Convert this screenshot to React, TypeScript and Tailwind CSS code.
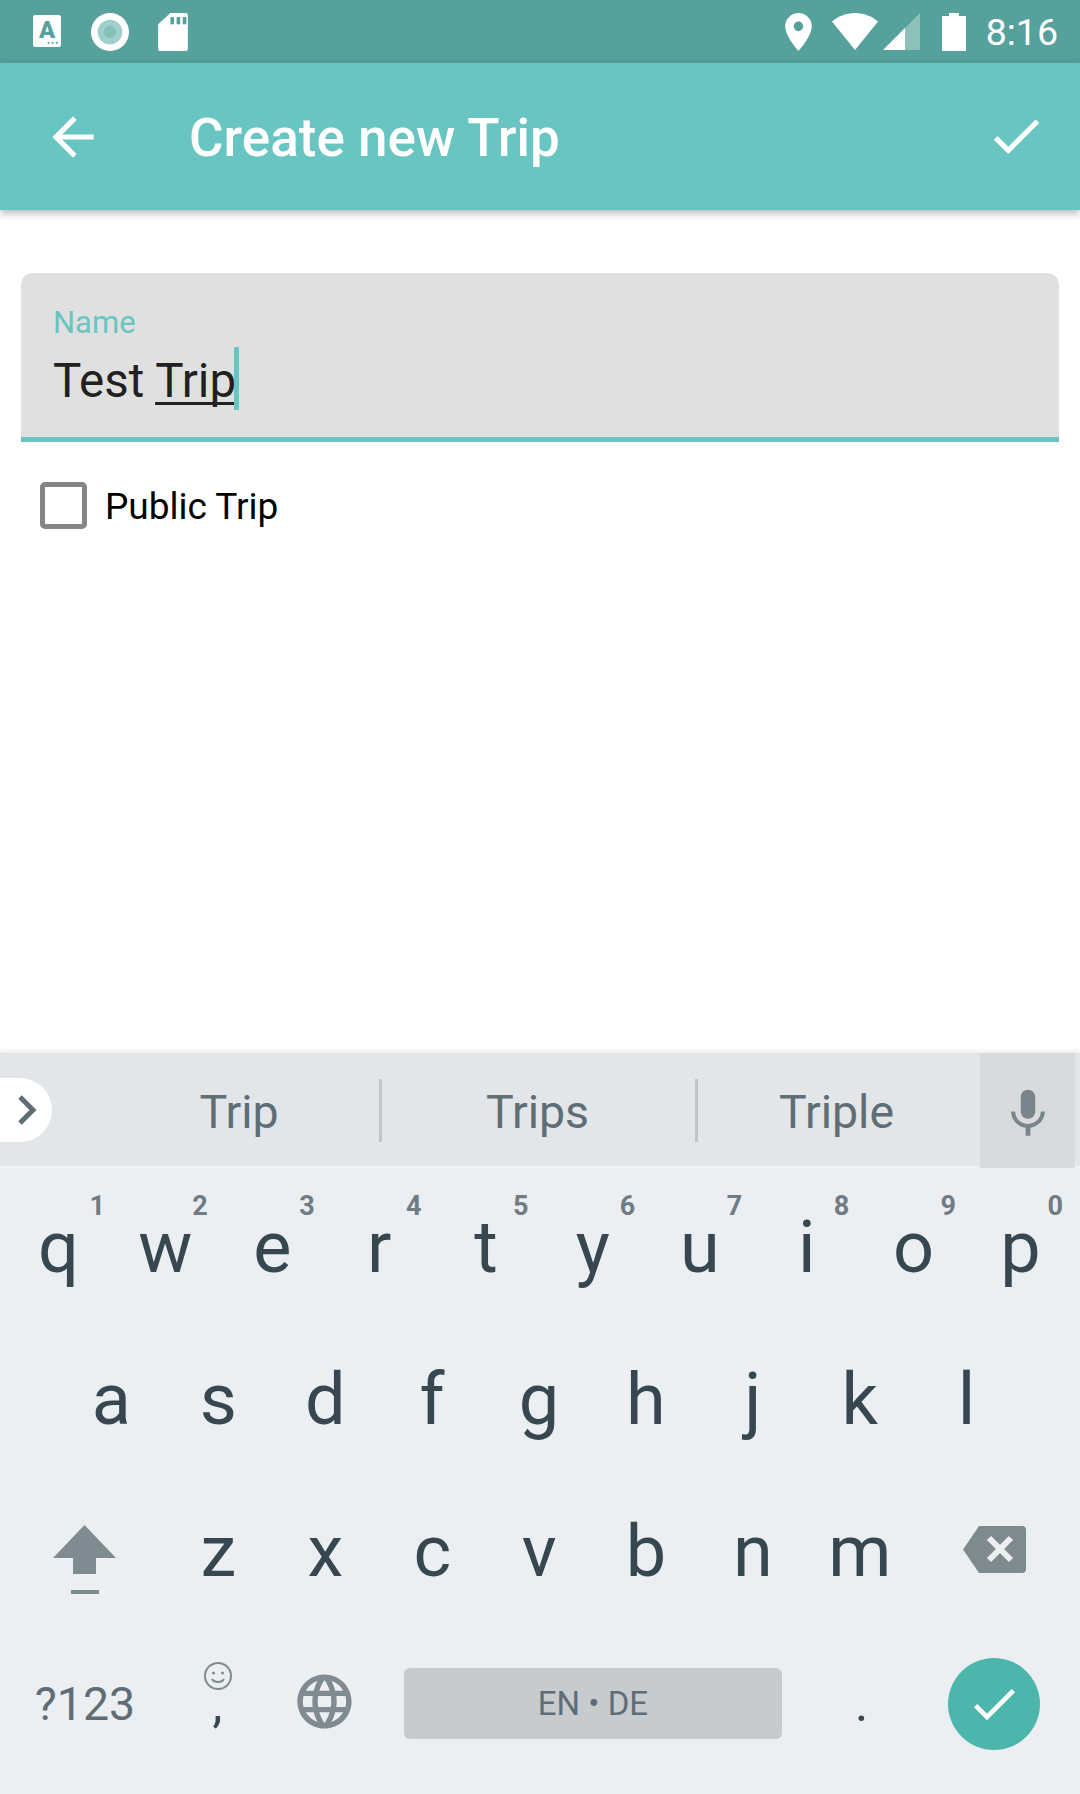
import { MdLanguage, MdMic } from 'react-icons/md';

const row1 = [
  ['q', '1'], ['w', '2'], ['e', '3'], ['r', '4'], ['t', '5'],
  ['y', '6'], ['u', '7'], ['i', '8'], ['o', '9'], ['p', '0'],
];
const row2 = ['a', 's', 'd', 'f', 'g', 'h', 'j', 'k', 'l'];
const row3 = ['z', 'x', 'c', 'v', 'b', 'n', 'm'];

function Key({ label, hint }: { label: string; hint?: string }) {
  return (
    <div className="relative w-[106.9px] h-full flex items-center justify-center text-[72px] leading-none text-[#37474f]">
      {label}
      {hint && (
        <span className={`absolute top-[18px] ${hint === '1' ? 'right-[7px]' : 'right-[11px]'} text-[27px] leading-[32px] font-bold text-[#6f7c84]`}>{hint}</span>
      )}
    </div>
  );
}

function StatusBar() {
  return (
    <div className="h-[63px] shrink-0 bg-[#57a19d] flex items-center justify-between pl-[33px] pr-[22px]">
      <div className="flex items-center">
        <svg width="28" height="32" viewBox="0 0 27 31" className="mt-[-1px]">
          <rect width="27" height="31" rx="2" fill="#fff" />
          <text x="13.5" y="22" textAnchor="middle" fontFamily="Roboto" fontWeight="900" fontSize="23" fill="#57a19d">A</text>
          <circle cx="15" cy="27" r="1" fill="#57a19d" />
          <circle cx="19" cy="27" r="1" fill="#57a19d" />
          <circle cx="23" cy="27" r="1" fill="#57a19d" />
        </svg>
        <svg width="38" height="38" viewBox="0 0 37 37" className="ml-[30px]">
          <circle cx="18.5" cy="18.5" r="18.5" fill="#fff" />
          <circle cx="18.5" cy="18.5" r="12" fill="#a0cfcb" />
          <circle cx="18.5" cy="18.5" r="6" fill="#84c0ba" />
        </svg>
        <svg width="30" height="38" viewBox="0 0 29 37" className="ml-[29px]">
          <path d="M12 0h15a2 2 0 0 1 2 2v33a2 2 0 0 1-2 2H2a2 2 0 0 1-2-2V11z" fill="#fff" />
          <rect x="12" y="4" width="3.5" height="7" fill="#57a19d" />
          <rect x="18" y="4" width="3.5" height="7" fill="#57a19d" />
          <rect x="24" y="4" width="3.5" height="7" fill="#57a19d" />
        </svg>
      </div>
      <div className="flex items-center">
        <svg width="27" height="38" viewBox="5 2 14 20" fill="#fff">
          <path d="M12 2C8.13 2 5 5.13 5 9c0 5.25 7 13 7 13s7-7.75 7-13c0-3.87-3.13-7-7-7zm0 9.500c-1.380 0-2.500-1.120-2.500-2.500s1.120-2.500 2.500-2.500 2.500 1.120 2.500 2.500-1.120 2.500-2.500 2.500z" />
        </svg>
        <svg width="46" height="37" viewBox="0 0 46 37" className="ml-[20px]">
          <path d="M0 8.500C6 3.500 14 0 23 0s17 3.500 23 8.500L23 37z" fill="#fff" />
        </svg>
        <svg width="37" height="37" viewBox="0 0 37 37" className="ml-[5px]">
          <path d="M22 15 37 0v37H22z" fill="#8cc0bb" />
          <path d="M0 37 22 15v22z" fill="#fff" />
        </svg>
        <svg width="24" height="38" viewBox="0 0 24 38" className="ml-[22px]">
          <path d="M7 0h10v3h7v35H0V3h7z" fill="#fff" />
        </svg>
        <span className="ml-[20px] mt-[2px] text-[37.5px] leading-none text-white">8:16</span>
      </div>
    </div>
  );
}

function AppBar() {
  return (
    <div className="relative z-10 h-[147px] shrink-0 bg-[#68c5c1] shadow-[0_3px_8px_rgba(0,0,0,0.3)] flex items-center pl-[42px] pr-[33px] text-white">
      <svg width="62" height="62" viewBox="0 0 24 24" fill="currentColor" className="shrink-0">
        <path d="M20 11H7.830l5.590-5.590L12 4l-8 8 8 8 1.410-1.410L7.830 13H20v-2z" />
      </svg>
      <h1 className="ml-[85px] mt-[4px] text-[53px] leading-none font-medium">Create new Trip</h1>
      <svg width="62" height="62" viewBox="0 0 24 24" fill="currentColor" className="ml-auto shrink-0 -mt-[2px]">
        <path d="M9 16.170L4.830 12l-1.420 1.410L9 19 21 7l-1.410-1.410z" />
      </svg>
    </div>
  );
}

function Form() {
  return (
    <div className="flex-1 bg-white px-[21px] pt-[63px]">
      <div className="h-[169px] bg-[#e0e0e0] rounded-t-[12px] border-b-[5px] border-[#68c5c1] pl-[32px] pt-[32px]">
        <div className="text-[31px] leading-[36px] text-[#68c5c1]">Name</div>
        <div className="relative mt-[8px] text-[47.5px] leading-[64px] text-[#212121]">
          Test <span className="underline decoration-[3px] underline-offset-[5px] [text-decoration-skip-ink:none]">Trip</span>
          <span className="relative -top-[2px] inline-block w-[5px] h-[63px] bg-[#68c5c1] align-top -ml-[2px]" />
        </div>
      </div>
      <div className="flex items-center mt-[39px] ml-[19px]">
        <div className="w-[47px] h-[47px] rounded-[5px] border-[5px] border-[#858585]" />
        <span className="ml-[18px] pt-[2px] text-[37px] leading-[47px] text-black">Public Trip</span>
      </div>
    </div>
  );
}

function Suggestions() {
  return (
    <div className="relative h-[115px] shrink-0 bg-[#e3e6e9] shadow-[0_-2px_4px_rgba(0,0,0,0.08)] border-b-[2px] border-[#f1f3f5] flex text-[46.5px] leading-none text-[#5f6d75]">
      <div className="w-[52px] h-[64px] mt-[25px] bg-white rounded-r-[32px] flex items-center shrink-0">
        <svg width="20" height="32" viewBox="0 0 20 32" className="ml-[17px]">
          <path d="M3 3l13 13L3 29" fill="none" stroke="#5f6d75" strokeWidth="5" />
        </svg>
      </div>
      <div className="w-[283px] ml-[44px] flex items-center justify-center pt-[6px] pl-[3px]">Trip</div>
      <div className="w-[3px] h-[63px] mt-[26px] bg-[#c1c5c8] shrink-0" />
      <div className="w-[313px] flex items-center justify-center pt-[6px] pr-[2px]">Trips</div>
      <div className="w-[3px] h-[63px] mt-[26px] bg-[#c1c5c8] shrink-0" />
      <div className="w-[282px] flex items-center justify-center pt-[6px] pr-[5px]">Triple</div>
      <div className="w-[95px] h-[115px] bg-[#d9dadc] flex items-center justify-center text-[#7a858b] shrink-0">
        <MdMic size={58} className="mt-[6px]" />
      </div>
    </div>
  );
}

function Keyboard() {
  return (
    <div className="h-[626px] shrink-0 bg-[#eceff1] pl-[5px] pr-[4px] pt-[4px]">
      <div className="h-[152px] flex">
        {row1.map(([k, n]) => (
          <Key key={k} label={k} hint={n} />
        ))}
      </div>
      <div className="h-[152px] flex pl-[53px]">
        {row2.map((k) => (
          <Key key={k} label={k} />
        ))}
      </div>
      <div className="h-[152px] flex">
        <div className="w-[160px] h-full flex items-center justify-center">
          <svg width="63" height="70" viewBox="0 0 63 70" className="mt-[16px] mr-[2px]">
            <path d="M31.500 0 63 33H43v16H20V33H0z" fill="#7f8b90" />
            <rect x="18" y="65" width="28" height="4" fill="#7f8b90" />
          </svg>
        </div>
        {row3.map((k) => (
          <Key key={k} label={k} />
        ))}
        <div className="flex-1 h-full flex items-center justify-center">
          <svg width="63" height="47" viewBox="0 0 63 47" className="-mt-[6px] mr-[1px]">
            <path d="M16 0h43a4 4 0 0 1 4 4v39a4 4 0 0 1-4 4H16L0 23.500z" fill="#7f8a8f" />
            <path d="M26 12l22 22M48 12 26 34" stroke="#eceff1" strokeWidth="6" />
          </svg>
        </div>
      </div>
      <div className="h-[152px] flex">
        <div className="w-[159px] h-full flex items-center justify-center pl-[1px] text-[46.5px] leading-none text-[#5f6d75]">?123</div>
        <div className="relative w-[106.9px] h-full flex items-center justify-center text-[50px] leading-none text-[#37474f]">
          ,
          <svg width="28" height="28" viewBox="0 0 28 28" className="absolute top-[34px] left-[40px]" fill="none" stroke="#7f8b90" strokeWidth="2">
            <circle cx="14" cy="14" r="13" />
            <circle cx="9.500" cy="11" r="1.500" fill="#7f8b90" stroke="none" />
            <circle cx="18.500" cy="11" r="1.500" fill="#7f8b90" stroke="none" />
            <path d="M8 17c2 4 10 4 12 0" />
          </svg>
        </div>
        <div className="w-[106.9px] h-full flex items-center justify-center text-[#7f8b90]">
          <MdLanguage size={65} className="-mt-[6px]" />
        </div>
        <div className="flex-1 h-full flex items-center pl-[26px] pr-[26px]">
          <div className="w-full h-[71px] -mt-[2px] rounded-[6px] bg-[#c7cbce] flex items-center justify-center text-[33px] leading-none text-[#5f6d75]">EN • DE</div>
        </div>
        <div className="w-[106.9px] h-full flex items-center justify-center text-[50px] leading-none text-[#37474f]">.</div>
        <div className="w-[161px] h-full flex items-center justify-center">
          <div className="w-[92px] h-[92px] mr-[3px] rounded-full bg-[#4db6ac] flex items-center justify-center">
            <svg width="56" height="56" viewBox="0 0 24 24" fill="#fff">
              <path d="M9 16.170L4.830 12l-1.420 1.410L9 19 21 7l-1.410-1.410z" />
            </svg>
          </div>
        </div>
      </div>
    </div>
  );
}

export default function App() {
  return (
    <div className="w-[1080px] h-[1794px] flex flex-col overflow-hidden bg-white font-['Roboto',sans-serif]">
      <StatusBar />
      <AppBar />
      <Form />
      <Suggestions />
      <Keyboard />
    </div>
  );
}
